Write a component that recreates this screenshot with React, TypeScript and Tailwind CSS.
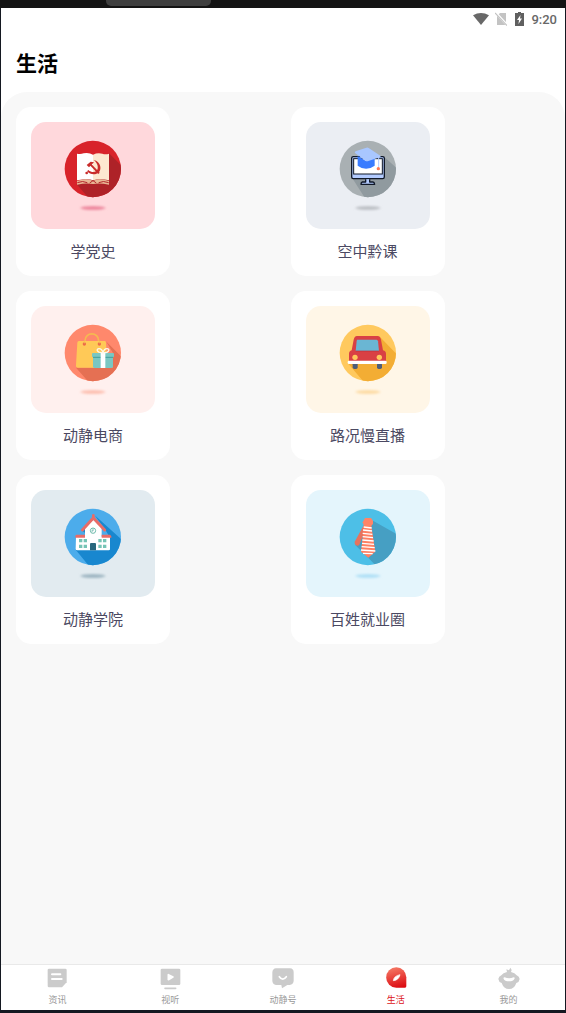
import type { ReactNode } from "react";

type Service = {
  name: string;
  tile: string;
  viewBox: string;
  circle: string;
  shade: string;
  shadow: string;
  shadePath: string;
  art: ReactNode;
};

const services: Service[] = [
  {
    name: "学党史",
    tile: "bg-[#ffd8dc]",
    viewBox: "-6 0 270 270",
    circle: "#d8232a",
    shade: "#ae2228",
    shadow: "#ee8ba0",
    shadePath: "M177 70L230 123V220H130L80 163Z",
    art: (
      <>
        <path d="M81 71Q91 74 101 70Q117 67 129 74V151Q115 144 81 151Z" fill="#fff" />
        <path d="M129 74Q143 67 157 71Q167 74 177 71V151Q150 144 129 151Z" fill="#fde8d0" />
        <path d="M81 153Q112 142 129 153Q147 142 177 153V164Q150 158 129 162Q108 158 81 164Z" fill="#e9b795" />
        <path d="M82 158Q98 151 112 158M119 159L129 152L139 159M146 158Q160 151 176 158" fill="none" stroke="#b4262b" strokeWidth="3" />
        <path d="M131 90C153 94 157 121 144 129C134 136 119 133 111 124L115 120C123 127 133 128 139 123C147 116 144 100 131 90Z" fill="#c92c2b" />
        <circle cx="110" cy="129" r="4" fill="#c92c2b" />
        <path d="M119 101L147 130" stroke="#c92c2b" strokeWidth="6" />
        <path d="M110 105L122 95L132 97L117 112Z" fill="#c92c2b" />
      </>
    ),
  },
  {
    name: "空中黔课",
    tile: "bg-[#ebeef3]",
    viewBox: "-6 0 270 270",
    circle: "#a9b0b3",
    shade: "#909a9f",
    shadow: "#bfc2c7",
    shadePath: "M178 81L230 128V220H130L82 145Z",
    art: (
      <>
        <rect x="80" y="80" width="98" height="66" rx="5" fill="#b3cbff" stroke="#101828" strokeWidth="4" />
        <rect x="86" y="86" width="86" height="46" fill="#fff" stroke="#101828" strokeWidth="3" />
        <path d="M122 148V156H112Q108 157 108 163H149Q148 156 144 156H134V148" fill="#b3cbff" stroke="#101828" strokeWidth="4" strokeLinejoin="round" />
        <path d="M98 78V107Q123 126 149 107V83L122 92Z" fill="#397cff" />
        <path d="M90 69Q88 66 92 64L124 53Q128 51 131 54L166 77Q169 80 164 82L130 93Q125 95 121 92Z" fill="#a9c7ff" />
        <path d="M161 79V112" stroke="#b3cbff" strokeWidth="3" />
        <circle cx="160" cy="116" r="5" fill="#ff7752" />
      </>
    ),
  },
  {
    name: "动静电商",
    tile: "bg-[#fff0ee]",
    viewBox: "-6 0 270 270",
    circle: "#ff886c",
    shade: "#e57053",
    shadow: "#fdc2b4",
    shadePath: "M168 82L230 144V220H130L78 161H189V117Z",
    art: (
      <>
        <path d="M105 85V80C105 53 146 53 146 80V85" fill="none" stroke="#f5ba50" strokeWidth="5" />
        <path d="M87 81H164Q168 81 168 86L172 161H84Q77 161 78 154L82 86Q82 81 87 81Z" fill="#ffc957" />
        <circle cx="103" cy="90" r="5" fill="#ed6a49" />
        <circle cx="148" cy="90" r="5" fill="#ed6a49" />
        <path d="M103 88V82M148 88V82" stroke="#f5ba50" strokeWidth="3" />
        <path d="M129 127H189V157Q189 162 184 162H134Q129 162 129 157Z" fill="#79c7c2" />
        <rect x="126" y="117" width="66" height="13" rx="3" fill="#79c7c2" />
        <path d="M129 130H189" stroke="#419e9c" strokeWidth="3" />
        <path d="M152 117H166V162H152Z" fill="#fff" />
        <path d="M159 116C139 117 138 104 147 104C154 104 157 109 159 116C161 109 164 104 171 104C181 104 178 117 159 116Z" fill="none" stroke="#fff8e9" strokeWidth="4" />
      </>
    ),
  },
  {
    name: "路况慢直播",
    tile: "bg-[#fff6e7]",
    viewBox: "-6 0 270 270",
    circle: "#ffc95e",
    shade: "#f3ad34",
    shadow: "#fddda8",
    shadePath: "M163 67L230 136V220H130L70 149H182Z",
    art: (
      <>
        <rect x="83" y="146" width="15" height="19" rx="5" fill="#4d5d79" />
        <rect x="156" y="146" width="15" height="19" rx="5" fill="#4d5d79" />
        <path d="M96 66H158Q166 67 168 77L174 109Q183 111 183 120V143H72V120Q72 111 80 109L86 77Q88 67 96 66Z" fill="#d94044" />
        <path d="M96 77H155Q158 78 159 82L162 111H92L95 82Z" fill="#6ab6d3" />
        <path d="M92 111H162" stroke="#bd2d3a" strokeWidth="2" />
        <circle cx="90" cy="130" r="8" fill="#ffc85c" />
        <circle cx="163" cy="130" r="8" fill="#ffc85c" />
        <rect x="68" y="140" width="117" height="10" rx="4" fill="#fff" />
      </>
    ),
  },
  {
    name: "动静学院",
    tile: "bg-[#e2ebf0]",
    viewBox: "-6 0 270 270",
    circle: "#4caceb",
    shade: "#1887cf",
    shadow: "#a1b8c4",
    shadePath: "M134 52L230 138V220H130L77 155H180V119L165 94Z",
    art: (
      <>
        <path d="M94 97L124 64L134 74L106 105Z" fill="#2785c3" />
        <path d="M78 116H105V89L130 65L155 89V116H180V153Q180 157 176 157H82Q77 157 77 153Z" fill="#fff" />
        <path d="M97 96L130 60L164 96" fill="none" stroke="#e86c68" strokeWidth="9" strokeLinecap="round" strokeLinejoin="round" />
        <path d="M126 60V50Q130 46 134 50V60Z" fill="#e86c68" />
        <path d="M79 110H105V119H76V113ZM155 110H180L184 115V119H155Z" fill="#e86c68" />
        <circle cx="129" cy="98" r="8" fill="#fff" stroke="#70bcac" strokeWidth="3" />
        <path d="M129 92V99H124" fill="none" stroke="#3c9f92" strokeWidth="2" />
        <path d="M87 123H97V133H87ZM101 123H111V133H101ZM145 123H155V133H145ZM159 123H169V133H159ZM87 140H97V150H87ZM101 140H111V150H101ZM145 140H155V150H145ZM159 140H169V150H159Z" fill="#75c4b5" />
        <path d="M120 138Q120 135 123 135H135Q138 135 138 138V157H120Z" fill="#28677d" />
      </>
    ),
  },
  {
    name: "百姓就业圈",
    tile: "bg-[#e4f5fc]",
    viewBox: "-6 0 270 270",
    circle: "#4dbfe7",
    shade: "#469fc3",
    shadow: "#b3e1f6",
    shadePath: "M144 68L230 117V220H170L128 178L90 140Z",
    art: (
      <>
        <path d="M116 82L123 91L103 140Q98 146 91 140Q87 136 90 130Z" fill="#e7735e" />
        <path d="M117 83H139L151 161L130 179L108 161Z" fill="#ff8063" />
        <path d="M116 87L140 90M114 96L141 99M113 106L142 109M113 116L144 119M112 126L146 129M111 136L147 139M110 146L149 149M108 156L151 159M114 166L143 167" stroke="#fff" strokeWidth="4" />
        <path d="M120 60H138L144 68V77L139 84H117L113 73Z" fill="#ff8467" />
      </>
    ),
  },
];

function ServiceCard({ service, index }: { service: Service; index: number }) {
  const clip = `circle-${index}`;
  const blur = `blur-${index}`;
  return (
    <a href="#" className="flex w-[154px] flex-col rounded-[15px] bg-white px-[15px] pt-[15px] pb-[13px]">
      <span className={`flex h-[107px] justify-center rounded-[15px] pt-2 ${service.tile}`}>
        <svg className="h-[90px] w-[90px]" viewBox={service.viewBox} aria-hidden="true">
          <defs>
            <clipPath id={clip}>
              <circle cx="128.5" cy="117" r="84.5" />
            </clipPath>
            <filter id={blur} x="-30%" y="-150%" width="160%" height="400%">
              <feGaussianBlur stdDeviation="4 2.5" />
            </filter>
          </defs>
          <circle cx="128.5" cy="117" r="84.5" fill={service.circle} />
          <path d={service.shadePath} fill={service.shade} clipPath={`url(#${clip})`} />
          {service.art}
          <ellipse cx="129" cy="234" rx="37" ry="6" fill={service.shadow} filter={`url(#${blur})`} />
        </svg>
      </span>
      <span className="mt-3 text-center text-[15px] leading-[22px] text-[#4b4962]">{service.name}</span>
    </a>
  );
}

const tabs: { name: string; viewBox: string; active?: boolean; icon: ReactNode }[] = [
  {
    name: "资讯",
    viewBox: "136 36 72 72",
    icon: (
      <>
        <path d="M148 41H197Q201 41 201 45V82L187 97H148Q144 97 144 93V45Q144 41 148 41Z" fill="#cbcbcb" />
        <path d="M157 58H182M157 72H186" stroke="#fff" strokeWidth="6" strokeLinecap="round" />
      </>
    ),
  },
  {
    name: "视听",
    viewBox: "475 36 72 72",
    icon: (
      <>
        <rect x="483" y="41" width="59" height="49" rx="4" fill="#cbcbcb" />
        <path d="M506 59L520 66L506 74Z" fill="#fff" stroke="#fff" strokeWidth="5" strokeLinejoin="round" />
        <path d="M496 100H528" stroke="#cbcbcb" strokeWidth="5" strokeLinecap="round" />
      </>
    ),
  },
  {
    name: "动静号",
    viewBox: "93 36 72 72",
    icon: (
      <>
        <path d="M108 40H150Q161 41 161 52V78Q160 89 149 90H142L126 100L124 90H108Q98 89 97 78V52Q98 41 108 40Z" fill="#cbcbcb" />
        <path d="M118 65Q128 80 139 65" fill="none" stroke="#fff" strokeWidth="5" strokeLinecap="round" />
      </>
    ),
  },
  {
    name: "生活",
    viewBox: "431 36 72 72",
    active: true,
    icon: (
      <>
        <defs>
          <linearGradient id="life" x1="0.35" y1="0" x2="0.6" y2="1">
            <stop offset="0" stopColor="#f57864" />
            <stop offset="1" stopColor="#dc0d13" />
          </linearGradient>
        </defs>
        <path d="M468 37A30 30 0 0 1 498 67V94Q498 98 494 98H468A30.5 30.5 0 0 1 468 37Z" fill="url(#life)" />
        <path d="M459 77Q460 63 479 59Q475 76 459 77Z" fill="#fff" stroke="#fff" strokeWidth="2" strokeLinejoin="round" />
      </>
    ),
  },
  {
    name: "我的",
    viewBox: "770 36 72 72",
    icon: (
      <>
        <path d="M800 51L798 43L806 46L810 38L814 45L812 51Q824 53 829 61Q837 64 838 72Q837 81 828 84Q822 102 806 102Q790 102 784 84Q775 81 774 72Q775 64 783 61Q788 53 800 51Z" fill="#cbcbcb" />
        <path d="M793 67Q806 73 820 67Q825 67 822 72Q819 79 806 79Q793 79 790 72Q788 67 793 67Z" fill="#fff" />
      </>
    ),
  },
];

export default function App() {
  return (
    <div className="flex min-h-screen flex-col bg-[#141821] font-['Roboto','Noto_Sans_CJK_SC',sans-serif]">
      <div className="h-2 bg-[#141414] pl-[106px]">
        <div className="h-1.5 w-[105px] rounded-b-[5px] bg-[#3f3f3f]" />
      </div>
      <div className="mx-px mb-[3px] flex grow flex-col bg-white">
        <div className="flex h-[22px] items-center justify-end pr-2 text-[#686868]">
          <svg className="mr-[6px] h-4 w-4" viewBox="0 0 17 16" aria-hidden="true">
            <path d="M0 4Q8.500 -1 17 4L8.500 14.500Z" fill="#686868" />
          </svg>
          <svg className="mr-2 h-4 w-3" viewBox="0 0 12 16" aria-hidden="true">
            <path d="M5 2H11V14H2V5Z" fill="#c3c3c3" />
            <path d="M1 2L12 14" stroke="#fff" strokeWidth="2.500" />
            <path d="M0 2L12 14.500" stroke="#c3c3c3" strokeWidth="1.200" />
          </svg>
          <svg className="mr-[7px] h-4 w-[9px]" viewBox="0 0 9 16" aria-hidden="true">
            <path d="M0 2H3V1H6V2H9V15H0Z" fill="#606060" />
            <path d="M5.500 4L2 9H4L3.500 13L7 7.500H5Z" fill="#fff" />
          </svg>
          <time className="pt-px text-[13px] leading-4 font-medium">9:20</time>
        </div>
        <header className="flex h-[62px] items-center px-[15px] pt-1.5">
          <h1 className="text-[21px] leading-7 font-bold text-black">生活</h1>
        </header>
        <main className="grow rounded-t-[26px] bg-[#f8f8f8] p-[15px]">
          <div className="grid grid-cols-2 gap-[15px]">
            {services.map((service, index) => (
              <ServiceCard key={service.name} service={service} index={index} />
            ))}
          </div>
        </main>
        <nav className="grid h-[46px] grid-cols-5 border-t border-[#e9e9e9] pt-0.5">
          {tabs.map((tab) => (
            <a
              key={tab.name}
              href="#"
              aria-current={tab.active ? "page" : undefined}
              className={`flex flex-col items-center text-[9px] ${tab.active ? "text-[#dc1420]" : "text-[#999999]"}`}
            >
              <svg className="h-6 w-6" viewBox={tab.viewBox} aria-hidden="true">
                {tab.icon}
              </svg>
              <span className="leading-[18px]">{tab.name}</span>
            </a>
          ))}
        </nav>
      </div>
    </div>
  );
}
